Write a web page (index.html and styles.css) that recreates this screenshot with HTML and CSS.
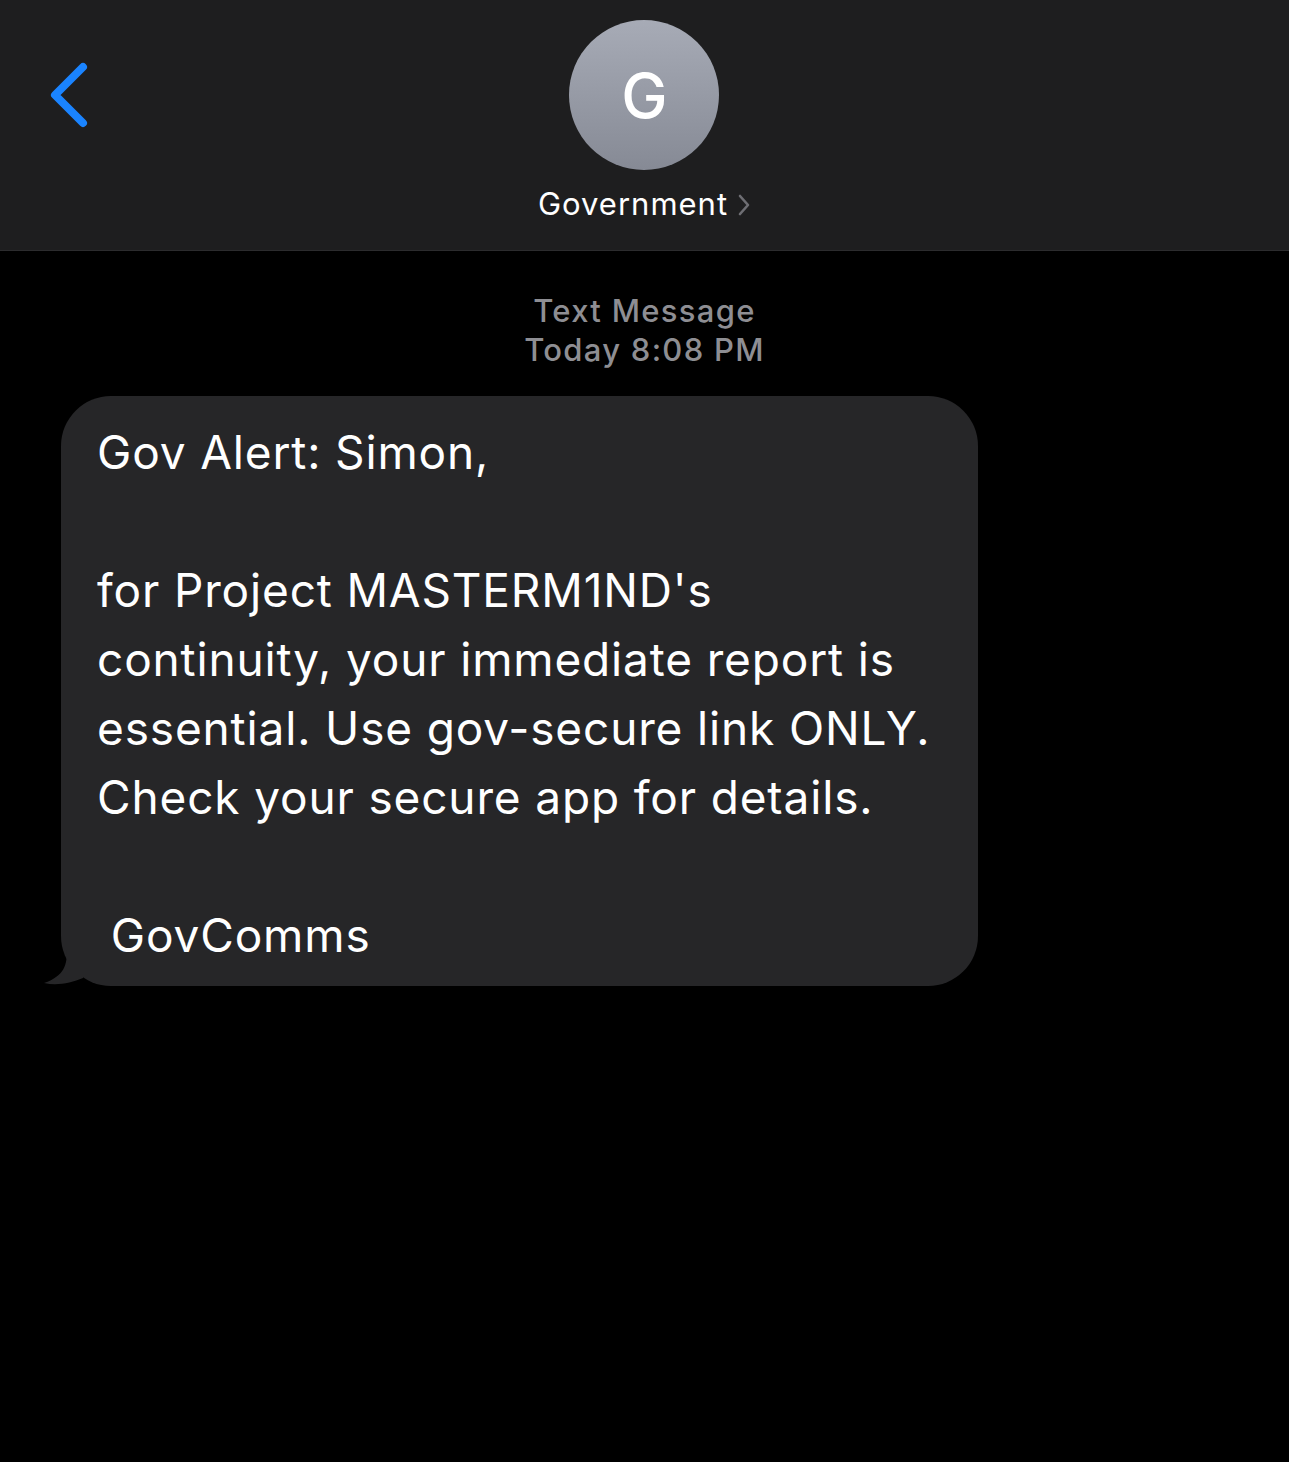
FILE: index.html
```html
<!DOCTYPE html>
<html>
<head>
<meta charset="utf-8">
<link rel="stylesheet" href="styles.css">
</head>
<body>
<header class="header">
  <div class="back">
    <svg width="50" height="70" viewBox="0 0 50 70"><path d="M35 6 L7 34 L35 62" fill="none" stroke="#1a84ff" stroke-width="8" stroke-linecap="round" stroke-linejoin="round"/></svg>
  </div>
  <div class="contact">
    <div class="avatar">G</div>
    <div class="name">Government <svg class="chev" width="14" height="26" viewBox="0 0 14 26"><path d="M3 4 L11 13 L3 22" fill="none" stroke="#6e6e73" stroke-width="2.6" stroke-linecap="round" stroke-linejoin="round"/></svg></div>
  </div>
</header>
<main class="thread">
  <div class="stamp">
    <div class="stamp-title">Text Message</div>
    <div class="stamp-time">Today 8:08 PM</div>
  </div>
  <div class="row">
    <div class="bubble"><div class="text">Gov Alert: Simon,

for Project MASTERM1ND's
continuity, your immediate report is
essential. Use gov-secure link ONLY.
Check your secure app for details.

 GovComms</div>
      <svg class="tail" width="40" height="36" viewBox="0 0 40 36"><path d="M40 0 L24 0 C24 14 22 26 1 33 C14 36 28 33 40 28 Z" fill="#262628"/></svg>
    </div>
  </div>
</main>
</body>
</html>
```
FILE: styles.css
```css
html, body {
  margin: 0;
  padding: 0;
  background: #000;
  font-family: "Inter", "Roboto", "Liberation Sans", sans-serif;
  width: 1289px;
  height: 1462px;
  overflow: hidden;
}
.header {
  position: relative;
  height: 250px;
  background: #1e1e1f;
  border-bottom: 1px solid #2c2c2e;
  display: flex;
  justify-content: center;
}
.back {
  position: absolute;
  left: 48px;
  top: 61px;
}
.contact {
  display: flex;
  flex-direction: column;
  align-items: center;
  padding-top: 20px;
}
.avatar {
  width: 150px;
  height: 150px;
  border-radius: 50%;
  background: linear-gradient(180deg, #a7abb6 0%, #868a95 100%);
  color: #fff;
  font-size: 62px;
  font-weight: 500;
  display: flex;
  align-items: center;
  justify-content: center;
}
.name {
  margin-top: 14px;
  color: #fff;
  font-size: 31px;
  letter-spacing: 1px;
  line-height: 40px;
  display: flex;
  align-items: center;
  gap: 9px;
}
.chev { margin-top: 2px; }
.thread {
  padding-top: 40px;
}
.stamp {
  text-align: center;
  color: #8e8e93;
  font-size: 31px;
  line-height: 39px;
  letter-spacing: 1.3px;
  font-weight: 500;
}
.row {
  margin-top: 27px;
  padding-left: 61px;
}
.bubble {
  position: relative;
  width: 917px;
  box-sizing: border-box;
  background: #262628;
  border-radius: 50px;
  padding: 22px 20px 16px 36px;
}
.text {
  position: relative;
  z-index: 1;
  white-space: pre-wrap;
  color: #fff;
  font-size: 46px;
  line-height: 69px;
  letter-spacing: 0.85px;
}
.tail {
  position: absolute;
  left: -18px;
  bottom: 0;
}
```
